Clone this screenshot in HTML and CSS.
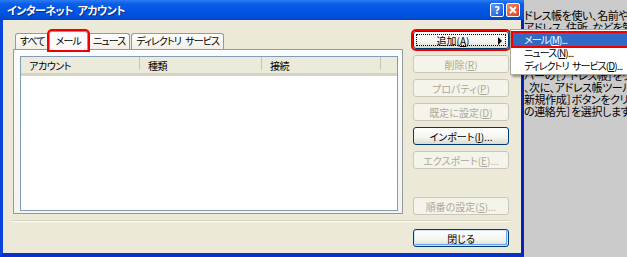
FILE: index.html
```html
<!DOCTYPE html>
<html lang="ja">
<head>
    <meta charset="UTF-8">
    <title>インターネット アカウント</title>
    <link rel="stylesheet" href="styles.css">
</head>
<body>
    <div class="screen">
        <div class="window">
            <div class="titlebar">
                <span class="title">インターネット アカウント</span>
                <div class="caption-buttons">
                    <span class="cap-btn cap-help">?</span>
                    <span class="cap-btn cap-close">
                        <svg width="8" height="8" viewBox="0 0 8 8"><path d="M1 1 L7 7 M7 1 L1 7" stroke="#fff" stroke-width="2"/></svg>
                    </span>
                </div>
            </div>

            <div class="dialog">
                <div class="main">
                    <div class="tab-area">
                        <div class="tabs">
                            <span class="tab">すべて</span>
                            <span class="tab active marked">メール</span>
                            <span class="tab">ニュース</span>
                            <span class="tab">ディレクトリ サービス</span>
                        </div>
                        <div class="panel">
                            <div class="list">
                                <div class="list-header">
                                    <span class="col col-account">アカウント</span>
                                    <span class="col col-type">種類</span>
                                    <span class="col col-conn">接続</span>
                                    <span class="col col-rest"></span>
                                </div>
                            </div>
                        </div>
                    </div>

                    <div class="buttons">
                        <button class="btn btn-sub focused marked"><span>追加(<u>A</u>)</span><span class="arrow"></span></button>
                        <button class="btn" disabled>削除(<u>R</u>)</button>
                        <button class="btn" disabled>プロパティ(<u>P</u>)</button>
                        <button class="btn" disabled>既定に設定(<u>D</u>)</button>
                        <button class="btn">インポート(<u>I</u>)...</button>
                        <button class="btn" disabled>エクスポート(<u>E</u>)...</button>
                        <button class="btn btn-last" disabled>順番の設定(<u>S</u>)...</button>
                    </div>
                </div>

                <div class="separator"></div>

                <div class="footer">
                    <button class="btn btn-default">閉じる</button>
                </div>
            </div>
        </div>

        <div class="backdrop">
            <div class="para">
                <p>ドレス帳を使い、名前や電</p>
                <p>アドレス、住所、などを管</p>
            </div>
            <div class="para para-lower">
                <p>ハーの［アドレス帳］をク</p>
                <p>、次に、アドレス帳ツール</p>
                <p>新規作成］ボタンをクリック</p>
                <p>の連絡先］を選択します</p>
            </div>
        </div>

        <div class="popup-menu">
            <div class="menu-item selected marked">メール(<u>M</u>)...</div>
            <div class="menu-item">ニュース(<u>N</u>)...</div>
            <div class="menu-item">ディレクトリ サービス(<u>D</u>)...</div>
        </div>
    </div>
</body>
</html>
```

FILE: styles.css
```css
* {
    box-sizing: border-box;
}

body {
    margin: 0;
    font-family: "Noto Sans CJK JP", "Liberation Sans", sans-serif;
    font-size: 10px;
    letter-spacing: -0.4px;
    font-feature-settings: "palt";
    color: #000;
}

.screen {
    position: relative;
    display: flex;
    width: 627px;
    height: 257px;
    overflow: hidden;
    background: #cbcbcb;
}

/* window */
.window {
    display: flex;
    flex-direction: column;
    width: 524px;
    flex-shrink: 0;
    position: relative;
    z-index: 1;
}

.titlebar {
    display: flex;
    align-items: center;
    height: 20px;
    padding: 0 4px 0 7px;
    background: linear-gradient(#2b7cf2 0%, #0a5de9 20%, #0055e2 55%, #004fd9 85%, #0643c0 100%);
}

.title {
    flex: 1;
    color: #fff;
    font-size: 11px;
    font-weight: bold;
    letter-spacing: -0.6px;
    word-spacing: 3px;
    text-shadow: 1px 1px 0 #0a2a8a;
}

.caption-buttons {
    display: flex;
    gap: 2px;
}

.cap-btn {
    display: flex;
    align-items: center;
    justify-content: center;
    width: 14px;
    height: 14px;
    border: 1px solid #fff;
    border-radius: 2px;
    color: #fff;
    font-family: "DejaVu Sans", sans-serif;
    font-size: 10px;
    font-weight: bold;
}

.cap-help {
    background: linear-gradient(135deg, #5c9cf8, #1652d9);
}

.cap-close {
    background: linear-gradient(135deg, #f08b6b, #d9401a);
}

.dialog {
    flex: 1;
    display: flex;
    flex-direction: column;
    padding: 10px 12px 0 10px;
    background: #ece9d8;
    border-left: 3px solid #0a46dc;
    border-right: 3px solid #0622b8;
    border-bottom: 4px solid #0733c8;
}

.main {
    display: flex;
    gap: 10px;
}

/* tabs */
.tab-area {
    width: 390px;
}

.tabs {
    display: flex;
    align-items: flex-end;
    height: 19px;
    padding-left: 2px;
}

.tab {
    height: 16px;
    padding: 0 4px;
    margin-right: 1px;
    line-height: 14px;
    letter-spacing: -0.9px;
    word-spacing: 3px;
    white-space: nowrap;
    border: 1px solid #919b9c;
    border-bottom: none;
    border-radius: 3px 3px 0 0;
    background: linear-gradient(#fefefe, #f0efe8);
}

.tab.active {
    position: relative;
    z-index: 2;
    height: 19px;
    margin: 0 0 -1px -2px;
    padding: 2px 6px 0;
    background: #fcfcfe;
}

.marked {
    box-shadow: 0 0 0 2px #f20000;
}

.panel {
    height: 165px;
    padding: 6px 4px 2px 6px;
    border: 1px solid #919b9c;
    background: linear-gradient(#fcfcfe, #f4f3ee);
}

.list {
    height: 100%;
    border: 1px solid #7f9db9;
    background: #fff;
}

.list-header {
    display: flex;
    height: 19px;
    background: #ebeadb;
    border-bottom: 3px solid #d6d3c2;
}

.col {
    padding: 1px 0 0 8px;
    line-height: 15px;
    border-right: 1px solid #c7c5b2;
    margin: 0 0 3px;
}

.col-account { width: 119px; }
.col-type { width: 122px; }
.col-conn { width: 119px; }
.col-rest { flex: 1; border-right: none; }

/* buttons */
.buttons {
    display: flex;
    flex-direction: column;
    gap: 6px;
    width: 96px;
    padding-top: 1px;
}

.btn {
    position: relative;
    height: 18px;
    padding: 0;
    font: inherit;
    color: #000;
    border: 1px solid #003c74;
    border-radius: 3px;
    background: linear-gradient(#fff 0%, #f4f4f0 60%, #dcdad0 100%);
}

.btn:disabled {
    color: #aca899;
    border-color: #c9c7ba;
    background: #f5f4ea;
}

.btn u {
    text-underline-offset: 1px;
}

.btn.focused {
    outline: 1px dotted #000;
    outline-offset: -4px;
}

.btn-sub {
    padding-right: 16px;
}

.arrow {
    position: absolute;
    right: 6px;
    top: 5px;
    border-left: 4px solid #000;
    border-top: 4px solid transparent;
    border-bottom: 4px solid transparent;
}

.btn-last {
    margin-top: 22px;
}

.separator {
    margin-top: 5px;
    height: 2px;
    border-top: 1px solid #d0d0bf;
    border-bottom: 1px solid #fff;
}

.footer {
    display: flex;
    justify-content: flex-end;
    padding-top: 7px;
}

.footer .btn {
    width: 96px;
}

.btn-default {
    box-shadow: inset 0 0 0 1px #cee7ff, inset -1px -1px 0 1px #69a2f2;
}

/* text behind the dialog */
.backdrop {
    padding-top: 9px;
    font-size: 11px;
    line-height: 12px;
    white-space: nowrap;
}

.backdrop p {
    margin: 0;
}

.para-lower {
    margin-top: 36px;
}

/* submenu */
.popup-menu {
    position: absolute;
    left: 510px;
    top: 29px;
    z-index: 3;
    width: 122px;
    padding: 3px 2px 2px;
    background: #fff;
    border: 1px solid #aca899;
    box-shadow: 2px 2px 2px rgba(0, 0, 0, 0.35);
}

.menu-item {
    height: 13px;
    padding-left: 11px;
    line-height: 13px;
    letter-spacing: -0.9px;
    word-spacing: 2px;
    white-space: nowrap;
}

.menu-item.selected {
    background: #316ac5;
    color: #fff;
}
```
